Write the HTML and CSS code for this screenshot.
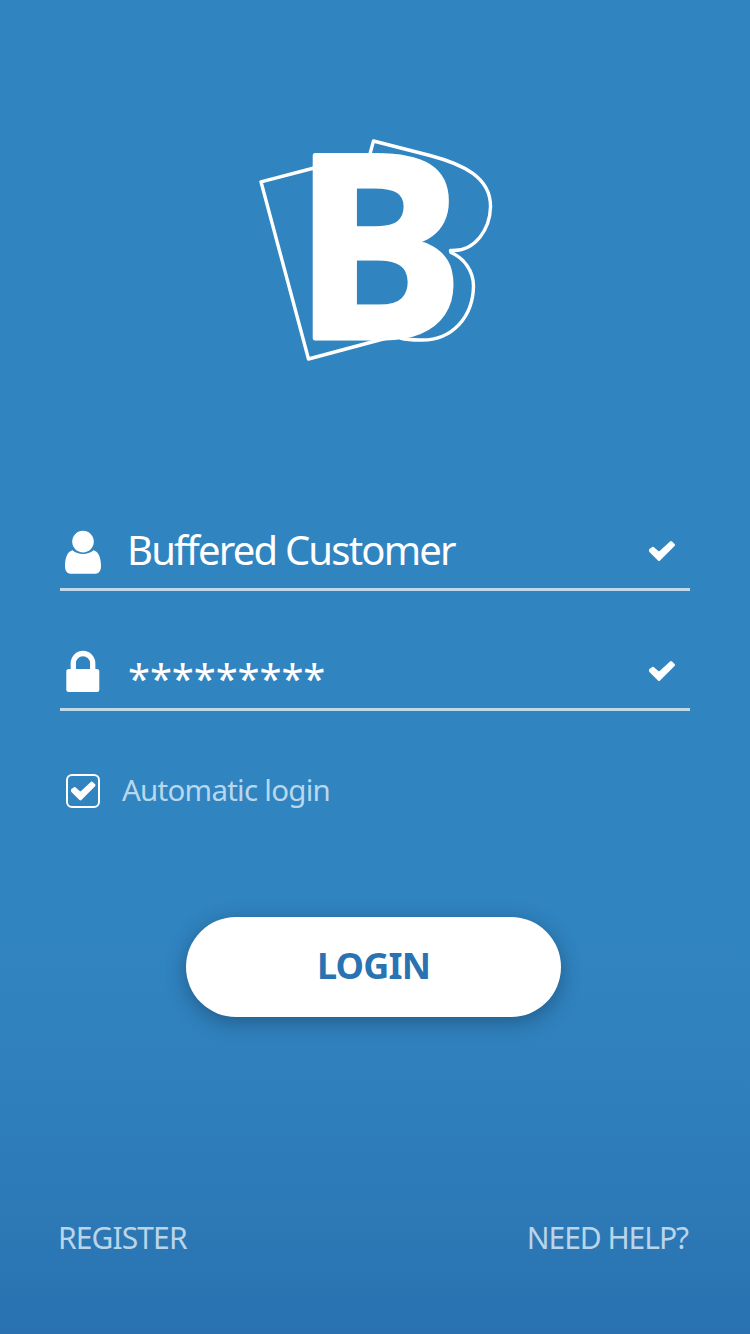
FILE: index.html
```html
<!DOCTYPE html>
<html lang="en">
<head>
<meta charset="utf-8">
<title>Login</title>
<link rel="stylesheet" href="styles.css">
</head>
<body>
<main class="screen">
  <svg class="logo" viewBox="250 50 250 380" role="img" aria-label="B">
    <g class="logo-lines">
      <path d="M316 167.500L261 181.800L308.500 359L385 338.500"/>
      <path d="M369.700 155L373.500 141L430 155.500C462 164 491 177 490.500 207C490 228 476 252 450.500 250.500L451 252.500C464 258 473.500 271 473.500 286C473 316 453 341 420 340C412 340 406 339.500 400 338"/>
    </g>
    <text class="logo-letter" x="293.500" y="338.200">B</text>
  </svg>
  <form class="form">
    <div class="field">
      <svg class="field-icon" viewBox="0 0 38 46"><circle cx="19" cy="12.600" r="10.800"/><path d="M8.500 21.300C3.500 22.300 1 29 1 37C1 42 3 44.800 7.500 44.800H30.500C35 44.800 37 42 37 37C37 29 34.500 22.300 29.500 21.300C23.500 26.300 14.500 26.300 8.500 21.300Z"/></svg>
      <span class="value">Buffered Customer</span>
      <svg class="tick" viewBox="0 0 26 20"><path d="M1.500 8.900L4 7.300L10 12.600L22 1.500L24.500 4L10 18.400L1.500 10Z"/></svg>
    </div>
    <div class="field">
      <svg class="field-icon" viewBox="0 0 38 46"><path class="shackle" d="M9.300 22V14.200A9.700 9.700 0 0 1 28.700 14.200V22"/><rect x="2.300" y="20" width="33" height="23" rx="2.500"/></svg>
      <span class="value password">*********</span>
      <svg class="tick" viewBox="0 0 26 20"><path d="M1.500 8.900L4 7.300L10 12.600L22 1.500L24.500 4L10 18.400L1.500 10Z"/></svg>
    </div>
    <label class="remember">
      <span class="checkbox"><svg class="tick" viewBox="0 0 26 20"><path d="M1.500 8.900L4 7.300L10 12.600L22 1.500L24.500 4L10 18.400L1.500 10Z"/></svg></span>
      <span class="remember-text">Automatic login</span>
    </label>
    <button class="login" type="button">LOGIN</button>
  </form>
  <footer class="links">
    <a class="link">REGISTER</a>
    <a class="link help">NEED HELP?</a>
  </footer>
</main>
</body>
</html>
```
FILE: styles.css
```css
* { box-sizing: border-box; }
body { margin: 0; font-family: "Noto Sans", "Open Sans", sans-serif; color: #fff; }
.screen {
  width: 750px;
  height: 1334px;
  padding: 50px 60px 0;
  display: flex;
  flex-direction: column;
  overflow: hidden;
  background: linear-gradient(#3084c0 0, #3084c0 950px, #2f81bd 1050px, #2c79b6 1220px, #2971b0 1334px);
}
.logo { width: 250px; height: 380px; margin-left: 190px; flex: none; }
.logo-lines { fill: none; stroke: #fff; stroke-width: 3.4; stroke-linejoin: round; }
.logo-letter { font-size: 256px; font-weight: 700; fill: #fff; stroke: #fff; stroke-width: 5; stroke-linejoin: round; }
.form { display: flex; flex-direction: column; padding-top: 70px; }
.field {
  height: 91px;
  margin-bottom: 29px;
  display: flex;
  align-items: flex-start;
  padding: 29px 15px 0 4px;
  border-bottom: 3px solid #c0daec;
}
.field-icon { width: 38px; height: 46px; fill: #fff; flex: none; }
.shackle { fill: none; stroke: #fff; stroke-width: 5.3; }
.value { flex: 1; margin-left: 25px; font-size: 40px; line-height: 42px; letter-spacing: -1.8px; }
.password { padding: 8px 0 0 1px; letter-spacing: -0.12px; }
.tick { width: 26px; height: 20px; margin-top: 12px; flex: none; overflow: visible; fill: #fff; stroke: #fff; stroke-width: 3; stroke-linejoin: round; }
.remember { display: flex; align-items: center; height: 36px; margin: 33px 0 0 6px; gap: 22px; }
.checkbox { width: 34px; height: 34px; border: 2px solid #fff; border-radius: 6px; display: grid; place-items: center; }
.checkbox .tick { width: 24.500px; margin: 0 0 1px 0; }
.remember-text { font-size: 29.500px; line-height: 34px; padding-bottom: 3px; letter-spacing: -0.75px; color: #b9d7ec; }
.login {
  width: 375px;
  height: 100px;
  margin: 108px 0 0 126px;
  padding: 0 0 3px;
  border: 0;
  border-radius: 50px;
  background: #fff;
  color: #2a73b2;
  font: 700 36px "Noto Sans", sans-serif;
  letter-spacing: -0.8px;
  box-shadow: 0 5px 20px rgba(20, 50, 80, .48);
}
.links { display: flex; justify-content: space-between; margin: 203px 2px 0 -2px; }
.link { font-size: 30px; line-height: 36px; letter-spacing: -0.9px; color: #bbd4e8; }
.help { letter-spacing: -1.05px; }
```
